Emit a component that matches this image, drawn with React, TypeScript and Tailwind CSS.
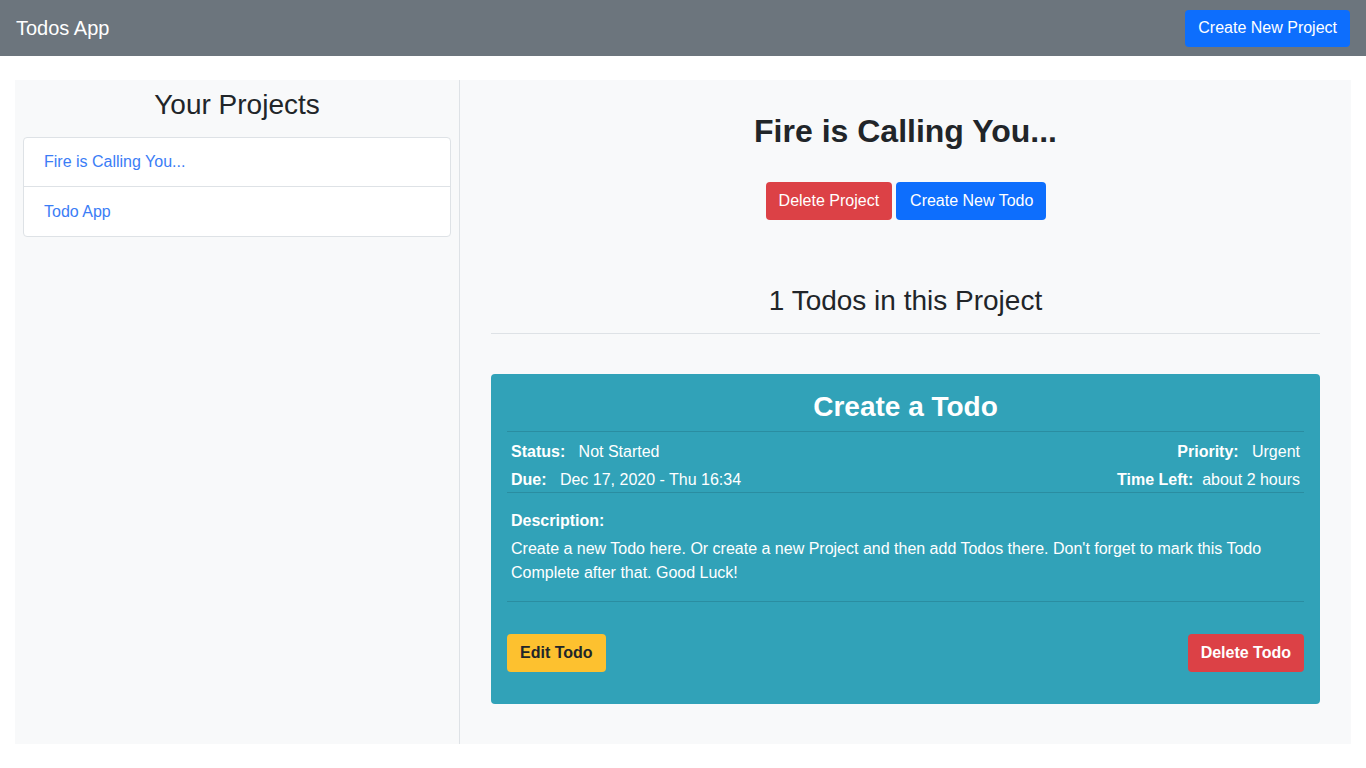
import React from 'react';

const projects = ['Fire is Calling You...', 'Todo App'];

const App: React.FC = () => {
  return (
    <div className="min-h-screen bg-white text-[#212529]" style={{ fontFamily: '"Liberation Sans", Arial, sans-serif' }}>
      {/* Navbar */}
      <nav className="h-14 bg-[#6c757d] flex items-center justify-between px-4">
        <span className="text-white text-[20px]">Todos App</span>
        <button className="bg-[#0d6efd] text-white text-base rounded px-[13px] h-[37px]">
          Create New Project
        </button>
      </nav>

      <div className="pt-6 px-[15px]">
        <div className="flex bg-[#f8f9fa] h-[664px]">
          {/* Projects sidebar */}
          <aside className="w-[445px] border-r border-[#dee2e6] px-2 pt-2">
            <h3 className="text-center text-[28px] leading-[34px] mb-[15px]">Your Projects</h3>
            <ul className="bg-white border border-[#dee2e6] rounded">
              {projects.map((p, i) => (
                <li
                  key={p}
                  className={`flex items-center px-5 text-[#3b7df6] text-base ${i > 0 ? 'h-[50px] border-t border-[#dee2e6]' : 'h-[48px]'}`}
                >
                  {p}
                </li>
              ))}
            </ul>
          </aside>

          {/* Project detail */}
          <section className="flex-1 px-[31px]">
            <h2 className="text-center text-[32px] font-bold leading-[38px] mt-8">Fire is Calling You...</h2>
            <div className="flex justify-center gap-1 mt-8 pl-px">
              <button className="bg-[#dc4146] text-white text-base rounded px-[13px] h-[38px]">Delete Project</button>
              <button className="bg-[#0d6efd] text-white text-base rounded pl-[14px] pr-[13px] h-[38px]">Create New Todo</button>
            </div>

            <h3 className="text-center text-[28px] leading-[34px] mt-16">1 Todos in this Project</h3>
            <hr className="border-0 h-px bg-[#dee2e6] mt-[15px]" />

            {/* Todo card */}
            <div className="mt-10 bg-[#31a2b8] rounded text-white px-4 pt-[14px] pb-8">
              <h4 className="text-center text-[28px] font-bold leading-[38px]">Create a Todo</h4>
              <div className="border-t border-[#2a8da1] mt-[5px] px-1 pt-[6px]">
                <div className="flex justify-between leading-7">
                  <div><b>Status:</b>&nbsp;&nbsp; Not Started</div>
                  <div><b>Priority:</b>&nbsp;&nbsp; Urgent</div>
                </div>
                <div className="flex justify-between leading-7">
                  <div><b>Due:</b>&nbsp;&nbsp; Dec 17, 2020 - Thu 16:34</div>
                  <div><b>Time Left:</b>&nbsp; about 2 hours</div>
                </div>
              </div>
              <div className="border-t border-[#2a8da1] -mt-[2px] px-1 pt-4 pb-4">
                <div className="font-bold leading-6 mb-1">Description:</div>
                <p className="leading-6">
                  Create a new Todo here. Or create a new Project and then add Todos there. Don't forget to mark this Todo Complete after that. Good Luck!
                </p>
              </div>
              <div className="border-t border-[#2a8da1] pt-8 flex justify-between">
                <button className="bg-[#fdc12f] text-[#212529] font-bold text-base rounded px-[13px] h-[38px]">Edit Todo</button>
                <button className="bg-[#dc4146] text-white font-bold text-base rounded px-[13px] h-[38px]">Delete Todo</button>
              </div>
            </div>
          </section>
        </div>
      </div>
    </div>
  );
};

export default App;
